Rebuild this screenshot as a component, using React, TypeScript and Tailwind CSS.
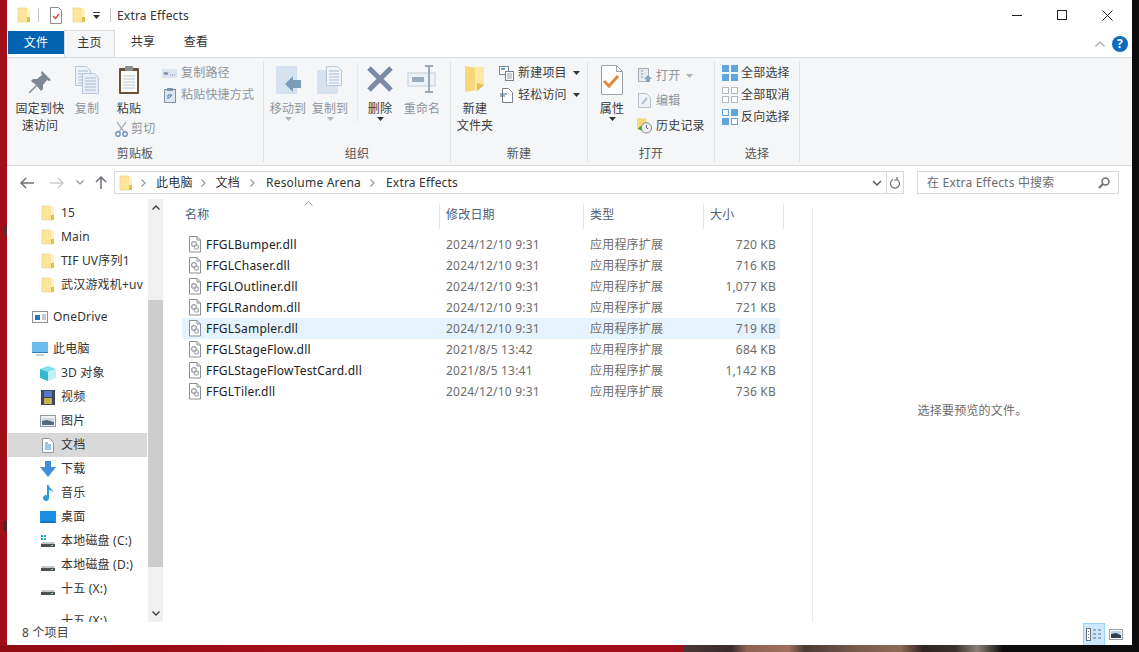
import type { ReactNode } from 'react'

const files = [
  { name: 'FFGLBumper.dll', date: '2024/12/10 9:31', size: '720 KB' },
  { name: 'FFGLChaser.dll', date: '2024/12/10 9:31', size: '716 KB' },
  { name: 'FFGLOutliner.dll', date: '2024/12/10 9:31', size: '1,077 KB' },
  { name: 'FFGLRandom.dll', date: '2024/12/10 9:31', size: '721 KB' },
  { name: 'FFGLSampler.dll', date: '2024/12/10 9:31', size: '719 KB', selected: true },
  { name: 'FFGLStageFlow.dll', date: '2021/8/5 13:42', size: '684 KB' },
  { name: 'FFGLStageFlowTestCard.dll', date: '2021/8/5 13:41', size: '1,142 KB' },
  { name: 'FFGLTiler.dll', date: '2024/12/10 9:31', size: '736 KB' },
]

function Folder({ className = '' }: { className?: string }) {
  return (
    <svg width="14" height="16" viewBox="0 0 14 16" className={className}>
      <path d="M1 1h8l1 1h1v13H1z" fill="#fee59c" stroke="#ecd48a" strokeWidth="0.8" />
      <path d="M10 2h3v13h-3z" fill="#fff0bd" />
      <path d="M10 10h3v5h-3z" fill="#e4bd4e" />
    </svg>
  )
}

function DllIcon() {
  return (
    <svg width="14" height="17" viewBox="0 0 14 17" className="shrink-0">
      <path d="M1.5.5h7.5l3.5 3.5v12h-11z" fill="#fff" stroke="#8b8f93" />
      <path d="M9 .5v3.5h3.5" fill="none" stroke="#8b8f93" />
      <circle cx="6" cy="8" r="2.4" fill="none" stroke="#9a9ea2" strokeWidth="1.2" />
      <circle cx="8.3" cy="11" r="2.2" fill="none" stroke="#a9adb1" strokeWidth="1.2" />
    </svg>
  )
}

function Doc({ x, y, w, h, fill = '#e6edf6', line = '#a9bdd2' }: { x: number; y: number; w: number; h: number; fill?: string; line?: string }) {
  const lines = []
  for (let ly = y + 5; ly < y + h - 2; ly += 3) {
    lines.push(<path key={ly} d={`M${x + 3} ${ly}h${w - 6}`} stroke={line} strokeWidth="1" />)
  }
  return (
    <g>
      <path d={`M${x + 0.5} ${y + 0.5}h${w - 5}l4 4v${h - 5}h-${w - 1}z`} fill={fill} stroke="#b9c8d8" />
      {lines}
    </g>
  )
}

function PinIcon() {
  return (
    <svg width="24" height="24" viewBox="0 0 24 24">
      <path d="M14 1l9 9-2 1-2-1-4 5 0 4-2 2-4-5-7 7-1 0 0-1 7-7-5-4 2-2 4 0 5-4-1-2z" fill="#7e8993" />
    </svg>
  )
}

function CopyIcon() {
  return (
    <svg width="26" height="30" viewBox="0 0 26 30">
      <Doc x={1} y={1} w={16} h={20} fill="#eef3f9" />
      <Doc x={8} y={8} w={17} h={21} />
    </svg>
  )
}

function PasteIcon() {
  return (
    <svg width="22" height="30" viewBox="0 0 22 30">
      <rect x="1" y="3" width="20" height="26" fill="#6b513a" rx="1" />
      <rect x="3" y="6" width="16" height="21" fill="#fbfbf8" />
      <path d="M5 11h12M5 14h12M5 17h12M5 20h12M5 23h12" stroke="#b9c7d6" />
      <rect x="7" y="1" width="8" height="5" fill="#8a8d90" rx="1" />
    </svg>
  )
}

function MoveIcon() {
  return (
    <svg width="28" height="30" viewBox="0 0 28 30">
      <rect x="2" y="1" width="21" height="28" fill="#d6e2ef" />
      <path d="M11 21l8-8v4h8v8h-8v4z" transform="translate(0 -2)" fill="#7b9db9" />
    </svg>
  )
}

function CopyToIcon() {
  return (
    <svg width="28" height="30" viewBox="0 0 28 30">
      <rect x="1" y="5" width="21" height="24" fill="#d6e2ef" />
      <Doc x={10} y={1} w={16} h={20} fill="#f1f5fa" />
    </svg>
  )
}

function DeleteIcon() {
  return (
    <svg width="28" height="28" viewBox="0 0 28 28">
      <path d="M3 3l22 22M25 3L3 25" stroke="#7b8aa4" strokeWidth="5" />
    </svg>
  )
}

function RenameIcon() {
  return (
    <svg width="30" height="28" viewBox="0 0 30 28">
      <rect x="1" y="8" width="27" height="13" fill="#eef2f6" stroke="#c3cdd7" />
      <rect x="5" y="12" width="12" height="5" fill="#9aabbd" />
      <path d="M22 2v24M18 1h8M18 27h8" stroke="#9aa9b7" strokeWidth="2" />
    </svg>
  )
}

function BigFolder() {
  return (
    <svg width="22" height="28" viewBox="0 0 22 28">
      <path d="M1 1l12 2 0 22-12 2z" fill="#f6d87a" />
      <path d="M11 2h9v18l-7 6h-2z" fill="#fde9a6" />
      <path d="M13 18l7 2-7 6z" fill="#e5bd50" />
    </svg>
  )
}

function PropsIcon() {
  return (
    <svg width="24" height="30" viewBox="0 0 24 30">
      <path d="M1.5.5h15l6 6v23h-21z" fill="#fff" stroke="#9aa1a8" />
      <path d="M16.5.5v6h6" fill="none" stroke="#9aa1a8" />
      <path d="M4 16l5 5 9-10" fill="none" stroke="#e08a3c" strokeWidth="3" />
    </svg>
  )
}

function SelectIcon({ kind }: { kind: 'all' | 'none' | 'invert' }) {
  const on = { fill: '#5ea6dc', stroke: '#5ea6dc' }
  const off = { fill: '#fff', stroke: kind === 'none' ? '#b5b9bd' : '#5ea6dc' }
  const cells = kind === 'all' ? [on, on, on, on] : kind === 'none' ? [off, off, off, off] : [off, on, on, off]
  return (
    <svg width="16" height="16" viewBox="0 0 16 16" className="shrink-0">
      <rect x="0.5" y="0.5" width="6" height="6" {...cells[0]} />
      <rect x="9.5" y="0.5" width="6" height="6" {...cells[1]} />
      <rect x="0.5" y="9.5" width="6" height="6" {...cells[2]} />
      <rect x="9.5" y="9.5" width="6" height="6" {...cells[3]} />
    </svg>
  )
}

function DownTri({ dim = false }: { dim?: boolean }) {
  return (
    <svg width="7" height="4" viewBox="0 0 7 4" className="shrink-0">
      <path d="M0 0h7L3.5 4z" fill={dim ? '#b0b4b8' : '#333'} />
    </svg>
  )
}

function BigButton({ icon, lines, width, arrow, dim }: { icon: ReactNode; lines: string[]; width: string; arrow?: 'dark' | 'dim'; dim?: boolean }) {
  return (
    <div className={`flex flex-col items-center pt-[7px] ${width}`}>
      <div className="flex h-[35px] items-start justify-center">{icon}</div>
      {lines.map((l) => (
        <div key={l} className={`h-[17px] leading-[17px] whitespace-nowrap ${dim ? 'text-[#8f959b]' : 'text-[#3c3c3c]'}`}>
          {l}
        </div>
      ))}
      {arrow && <DownTri dim={arrow === 'dim'} />}
    </div>
  )
}

function SmallButton({ icon, label, dim, arrow, h = 'h-[22px]' }: { icon: ReactNode; label: string; dim?: boolean; arrow?: 'dark' | 'dim'; h?: string }) {
  return (
    <div className={`flex items-center gap-[4px] whitespace-nowrap ${h} ${dim ? 'text-[#8f959b]' : 'text-[#3c3c3c]'}`}>
      <div className="flex w-[15px] shrink-0 justify-center">{icon}</div>
      <span>{label}</span>
      {arrow && <span className="ml-[2px]"><DownTri dim={arrow === 'dim'} /></span>}
    </div>
  )
}

function Group({ label, width, children }: { label: string; width: string; children: ReactNode }) {
  return (
    <div className={`flex shrink-0 flex-col ${width}`}>
      <div className="flex h-[88px]">{children}</div>
      <div className="h-[16px] text-center leading-[16px] text-[#555]">{label}</div>
    </div>
  )
}

function GroupLine() {
  return <div className="my-[3px] w-px shrink-0 bg-[#e1e3e5]" />
}

function NavRow({ icon, label, pad, active }: { icon: ReactNode; label: string; pad: string; active?: boolean }) {
  return (
    <div className={`flex h-[24px] shrink-0 items-center gap-[5px] whitespace-nowrap ${pad} ${active ? 'mx-px bg-[#d9d9d9]' : ''}`}>
      <div className="flex w-[16px] shrink-0 justify-center">{icon}</div>
      <span className="text-[#333]">{label}</span>
    </div>
  )
}

function Drive({ win }: { win?: boolean }) {
  return (
    <svg width="16" height="14" viewBox="0 0 16 14">
      {win && <path d="M1 1h2v2H1zM4 1h2v2H4zM1 4h2v2H1zM4 4h2v2H4z" fill="#27a5c9" />}
      <path d="M2 8h12l1 2H1z" fill="#c4c6c8" />
      <rect x="1" y="10" width="14" height="3" fill="#4b5157" />
      <rect x="11" y="11" width="2" height="1" fill="#8fe08f" />
    </svg>
  )
}

function Crumb({ className = '' }: { className?: string }) {
  return (
    <svg width="5" height="8" viewBox="0 0 5 8" className={className}>
      <path d="M.5.500L4 4 .5 7.500" fill="none" stroke="#8e9297" strokeWidth="1.1" />
    </svg>
  )
}

export default function App() {
  return (
    <div className="flex h-[652px] w-[1139px] flex-col overflow-hidden bg-[#111] font-['Noto_Sans','Noto_Sans_CJK_SC',sans-serif] text-[12px] tracking-[0.2px]">
      <div className="flex h-[645px] shrink-0">
        <div className="flex w-[7px] shrink-0 flex-col bg-[#a10f19]">
          <div className="mt-[226px] ml-[4px] h-[10px] w-[3px] bg-[#5c2a2c]" />
          <div className="mt-[285px] ml-[4px] h-[10px] w-[3px] bg-[#4a2325]" />
        </div>

        <div className="flex w-[1125px] shrink-0 flex-col bg-white">
          {/* title bar */}
          <div className="flex h-[30px] shrink-0 items-center">
            <Folder className="ml-[10px]" />
            <div className="ml-[7px] h-[14px] w-px bg-[#c8c8c8]" />
            <svg width="14" height="17" viewBox="0 0 14 17" className="ml-[10px]">
              <path d="M1.5.5h8l3 3v13h-11z" fill="#fff" stroke="#8d8d8d" />
              <path d="M4 9l2.500 2.500L10 7" fill="none" stroke="#d8483a" strokeWidth="1.4" />
            </svg>
            <Folder className="ml-[9px]" />
            <div className="ml-[6px] flex w-[8px] flex-col items-center gap-[2px]">
              <div className="h-px w-[7px] bg-[#333]" />
              <DownTri />
            </div>
            <div className="ml-[10px] h-[14px] w-px bg-[#c8c8c8]" />
            <span className="mt-[2px] ml-[6px] text-[#333]">Extra Effects</span>
            <div className="ml-auto flex items-center">
              <div className="mr-[35px] h-px w-[10px] bg-[#222]" />
              <div className="mr-[35px] h-[10px] w-[10px] border border-[#222]" />
              <svg width="11" height="11" viewBox="0 0 11 11" className="mr-[19px]">
                <path d="M.5.5l10 10M10.500.5l-10 10" stroke="#222" />
              </svg>
            </div>
          </div>

          {/* tabs */}
          <div className="flex h-[28px] shrink-0 items-start">
            <div className="mt-px ml-px flex h-[23px] w-[56px] items-center justify-center bg-[#0063b1] text-white">文件</div>
            <div className="flex h-[28px] w-[51px] items-center justify-center border-x border-t border-[#dadbdc] bg-[#f5f6f7] pb-[3px] text-[#333]">主页</div>
            <div className="flex h-[24px] w-[56px] items-center justify-center text-[#333]">共享</div>
            <div className="flex h-[24px] w-[50px] items-center justify-center text-[#333]">查看</div>
            <div className="mt-[6px] mr-[4px] ml-auto flex items-center gap-[7px]">
              <svg width="10" height="6" viewBox="0 0 10 6">
                <path d="M.5 5.500L5 1l4.500 4.500" fill="none" stroke="#a9adb1" strokeWidth="1.3" />
              </svg>
              <div className="flex h-[16px] w-[16px] items-center justify-center rounded-full bg-[#0f6cbd] text-[12px] leading-none font-bold text-white">?</div>
            </div>
          </div>

          {/* ribbon */}
          <div className="-mt-px flex h-[109px] shrink-0 border-y border-[#dadbdc] bg-[#f5f6f7]">
            <Group label="剪贴板" width="w-[256px]">
              <div className="w-[7px]" />
              <BigButton width="w-[52px]" icon={<div className="pt-[5px]"><PinIcon /></div>} lines={['固定到快', '速访问']} />
              <BigButton width="w-[42px]" dim icon={<CopyIcon />} lines={['复制']} />
              <div className="flex w-[42px] flex-col items-center">
                <BigButton width="w-[42px]" icon={<PasteIcon />} lines={['粘贴']} />
                <div className="mt-[3px] ml-[7px] flex items-center gap-[3px] self-start whitespace-nowrap text-[#8f959b]">
                  <svg width="13" height="16" viewBox="0 0 13 16" className="shrink-0">
                    <path d="M2 1l7 10M11 1L4 11" stroke="#9aa3ab" strokeWidth="1.2" />
                    <circle cx="3" cy="13" r="2.200" fill="none" stroke="#6f93b5" strokeWidth="1.4" />
                    <circle cx="10" cy="13" r="2.200" fill="none" stroke="#6f93b5" strokeWidth="1.4" />
                  </svg>
                  <span>剪切</span>
                </div>
              </div>
              <div className="ml-[12px] flex flex-col pt-[4px]">
                <SmallButton dim label="复制路径" icon={
                  <svg width="15" height="9" viewBox="0 0 15 9"><rect width="15" height="9" fill="#dbe5f0" /><path d="M2 3l1 3 1-3 1 3 1-3M8 6h1M10 6h1M12 6h1" stroke="#7d93aa" fill="none" /></svg>
                } />
                <SmallButton dim label="粘贴快捷方式" icon={
                  <svg width="12" height="15" viewBox="0 0 12 15"><rect x=".5" y="1.500" width="11" height="13" fill="#dce6f0" stroke="#7d93aa" /><rect x="3" y="0" width="6" height="3" fill="#7d93aa" /><path d="M4 11V7h4M8 7l-3 3" stroke="#3a7ab5" fill="none" /></svg>
                } />
              </div>
            </Group>
            <GroupLine />
            <Group label="组织" width="w-[186px]">
              <BigButton width="w-[48px]" dim icon={<MoveIcon />} lines={['移动到']} arrow="dim" />
              <BigButton width="w-[36px]" dim icon={<CopyToIcon />} lines={['复制到']} arrow="dim" />
              <div className="my-[4px] ml-[9px] h-[60px] w-px bg-[#e6e8ea]" />
              <BigButton width="w-[44px]" icon={<DeleteIcon />} lines={['删除']} arrow="dark" />
              <BigButton width="w-[40px]" dim icon={<RenameIcon />} lines={['重命名']} />
            </Group>
            <GroupLine />
            <Group label="新建" width="w-[136px]">
              <BigButton width="w-[48px]" icon={<BigFolder />} lines={['新建', '文件夹']} />
              <div className="flex flex-col pt-[4px]">
                <SmallButton label="新建项目" arrow="dark" icon={
                  <svg width="15" height="15" viewBox="0 0 15 15"><rect x=".5" y=".5" width="9" height="8" fill="#fff" stroke="#6f8a9e" /><rect x="2" y="2" width="4" height="2" fill="#5ea6dc" /><rect x="6.500" y="5.500" width="8" height="9" fill="#fff" stroke="#7b7f83" /><path d="M8 8h5M8 10h5M8 12h5" stroke="#9a9ea2" /></svg>
                } />
                <SmallButton label="轻松访问" arrow="dark" icon={
                  <svg width="13" height="15" viewBox="0 0 13 15"><path d="M2.500.5h6l4 4v10h-10z" fill="#fff" stroke="#7b7f83" /><path d="M0 6h7M0 8h5" stroke="#4a6b8a" /></svg>
                } />
              </div>
            </Group>
            <GroupLine />
            <Group label="打开" width="w-[126px]">
              <BigButton width="w-[48px]" icon={<PropsIcon />} lines={['属性']} arrow="dark" />
              <div className="ml-px flex flex-col pt-[5px]">
                <SmallButton dim h="h-[25px]" label="打开" arrow="dim" icon={
                  <svg width="14" height="15" viewBox="0 0 14 15"><rect x=".5" y=".5" width="10" height="13" fill="#e6ebf0" stroke="#a5aeb7" /><path d="M3 3h2M3 6h2M3 9h2" stroke="#8d97a1" /><path d="M10 7l4 4h-2v3h-4v-3H6z" fill="#8aa4bb" /></svg>
                } />
                <SmallButton dim h="h-[25px]" label="编辑" icon={
                  <svg width="13" height="15" viewBox="0 0 13 15"><path d="M.5.5h8l4 4v10H.5z" fill="#eef2f6" stroke="#b9c2cb" /><path d="M4 11l5-6" stroke="#a9b7c5" strokeWidth="1.5" /></svg>
                } />
                <SmallButton h="h-[25px]" label="历史记录" icon={
                  <svg width="16" height="16" viewBox="0 0 16 16"><rect x="0" y="0" width="10" height="12" fill="#f6d87a" /><circle cx="10" cy="10" r="5.500" fill="#eef0f2" stroke="#7b8085" /><path d="M10 7v3l2 1" stroke="#555" fill="none" /><path d="M1 11l3-3 1 5z" fill="#3f9a3f" /></svg>
                } />
              </div>
            </Group>
            <GroupLine />
            <Group label="选择" width="w-[84px]">
              <div className="ml-[7px] flex flex-col pt-[4px]">
                <SmallButton label="全部选择" icon={<SelectIcon kind="all" />} />
                <SmallButton label="全部取消" icon={<SelectIcon kind="none" />} />
                <SmallButton label="反向选择" icon={<SelectIcon kind="invert" />} />
              </div>
            </Group>
            <GroupLine />
          </div>

          {/* address row */}
          <div className="flex h-[33px] shrink-0 items-center">
            <svg width="14" height="12" viewBox="0 0 14 12" className="ml-[13px]">
              <path d="M6 1L1 6l5 5M1 6h13" fill="none" stroke="#6b7076" strokeWidth="1.5" />
            </svg>
            <svg width="14" height="12" viewBox="0 0 14 12" className="ml-[16px]">
              <path d="M8 1l5 5-5 5M13 6H0" fill="none" stroke="#c9cccf" strokeWidth="1.5" />
            </svg>
            <svg width="8" height="5" viewBox="0 0 8 5" className="ml-[12px]">
              <path d="M.5.5L4 4 7.500.5" fill="none" stroke="#8e9297" strokeWidth="1.2" />
            </svg>
            <svg width="12" height="13" viewBox="0 0 12 13" className="ml-[11px]">
              <path d="M1 6l5-5 5 5M6 1v12" fill="none" stroke="#6b7076" strokeWidth="1.5" />
            </svg>
            <div className="ml-[7px] flex h-[23px] w-[790px] items-center border border-[#d9d9d9] text-[#333]">
              <Folder className="ml-[4px]" />
              <Crumb className="ml-[8px]" />
              <span className="ml-[10px]">此电脑</span>
              <Crumb className="ml-[8px]" />
              <span className="ml-[10px]">文档</span>
              <Crumb className="ml-[10px]" />
              <span className="ml-[11px]">Resolume Arena</span>
              <Crumb className="ml-[9px]" />
              <span className="ml-[11px]">Extra Effects</span>
              <svg width="10" height="6" viewBox="0 0 10 6" className="mr-[2px] ml-auto">
                <path d="M1 1l4 4 4-4" fill="none" stroke="#555" strokeWidth="1.4" />
              </svg>
              <div className="ml-[2px] flex h-full w-[17px] items-center justify-center border-l border-[#d9d9d9]">
                <svg width="11" height="12" viewBox="0 0 11 12">
                  <path d="M3 2.500a4.500 4.500 0 1 0 4 0M7 0v3H4" fill="none" stroke="#6b7076" strokeWidth="1.2" />
                </svg>
              </div>
            </div>
            <div className="ml-[13px] flex h-[23px] w-[202px] items-center border border-[#d9d9d9] pl-[9px] text-[#6d6d6d]">
              在 Extra Effects 中搜索
              <svg width="12" height="12" viewBox="0 0 12 12" className="mr-[8px] ml-auto">
                <circle cx="7.500" cy="4.500" r="3.500" fill="none" stroke="#6b7076" strokeWidth="1.5" />
                <path d="M5 7l-4 4" stroke="#6b7076" strokeWidth="2" />
              </svg>
            </div>
          </div>

          {/* body */}
          <div className="flex h-[423px] shrink-0">
            {/* nav pane */}
            <div className="flex h-[423px] w-[141px] shrink-0 flex-col overflow-hidden pt-[2px]">
              <NavRow pad="pl-[33px]" icon={<Folder />} label="15" />
              <NavRow pad="pl-[33px]" icon={<Folder />} label="Main" />
              <NavRow pad="pl-[33px]" icon={<Folder />} label="TIF UV序列1" />
              <NavRow pad="pl-[33px]" icon={<Folder />} label="武汉游戏机+uv" />
              <div className="h-[8px] shrink-0" />
              <NavRow pad="pl-[25px]" label="OneDrive" icon={
                <svg width="16" height="12" viewBox="0 0 16 12"><rect x=".5" y=".5" width="15" height="11" fill="#fff" stroke="#8d9196" /><rect x="3" y="4" width="5" height="5" fill="#1f78c4" /><path d="M10 4h4M10 6h4M10 8h4" stroke="#8d9196" /></svg>
              } />
              <div className="h-[8px] shrink-0" />
              <NavRow pad="pl-[25px]" label="此电脑" icon={
                <svg width="16" height="14" viewBox="0 0 16 14"><rect x="0" y="0" width="16" height="10" fill="#6bbdf0" /><rect x="0" y="10" width="16" height="1" fill="#2f7fbf" /><path d="M4 13h8" stroke="#9a9ea2" /></svg>
              } />
              <NavRow pad="pl-[33px]" label="3D 对象" icon={
                <svg width="16" height="15" viewBox="0 0 16 15"><path d="M8 0l8 3-8 3-8-3z" fill="#7fe0ea" /><path d="M0 3l8 3v9l-8-3z" fill="#35b6cf" /><path d="M16 3l-8 3v9l8-3z" fill="#bfeef4" /></svg>
              } />
              <NavRow pad="pl-[33px]" label="视频" icon={
                <svg width="14" height="15" viewBox="0 0 14 15"><rect width="14" height="15" fill="#3d4a5c" /><rect x="3" y="1" width="8" height="6" fill="#5b79c9" /><rect x="3" y="8" width="8" height="6" fill="#c6b24b" /></svg>
              } />
              <NavRow pad="pl-[33px]" label="图片" icon={
                <svg width="16" height="12" viewBox="0 0 16 12"><rect x=".5" y=".5" width="15" height="11" fill="#eef2f5" stroke="#8d9aa5" /><path d="M2 3h12v3H2z" fill="#cfdce6" /><path d="M2 6l5-1 7 2v3H2z" fill="#58697a" /></svg>
              } />
              <NavRow pad="pl-[32px]" active label="文档" icon={
                <svg width="12" height="15" viewBox="0 0 12 15"><path d="M.5.5h7l4 4v10H.5z" fill="#fff" stroke="#8d9aa5" /><path d="M3 5h3M3 7h6M3 9h6M3 11h6" stroke="#3a8fc9" /></svg>
              } />
              <NavRow pad="pl-[33px]" label="下载" icon={
                <svg width="16" height="16" viewBox="0 0 16 16"><path d="M5 0h6v6h5l-8 10L0 6h5z" fill="#3f8fdc" /></svg>
              } />
              <NavRow pad="pl-[33px]" label="音乐" icon={
                <svg width="12" height="16" viewBox="0 0 12 16"><path d="M5 0h1.600c.3 3 4.400 3.500 4.400 7.500-1-2-3-2.500-4-2.500v8a3 3 0 1 1-2-2.800z" fill="#2f9ad8" /></svg>
              } />
              <NavRow pad="pl-[33px]" label="桌面" icon={
                <svg width="16" height="12" viewBox="0 0 16 12"><rect width="16" height="12" fill="#1a8fe3" /><path d="M1 11h14" stroke="#0b5ea5" /></svg>
              } />
              <NavRow pad="pl-[33px]" label="本地磁盘 (C:)" icon={<Drive win />} />
              <NavRow pad="pl-[33px]" label="本地磁盘 (D:)" icon={<Drive />} />
              <NavRow pad="pl-[33px]" label="十五 (X:)" icon={<Drive />} />
              <div className="h-[8px] shrink-0" />
              <NavRow pad="pl-[33px]" label="十五 (X:)" icon={<Drive />} />
            </div>

            {/* scrollbar */}
            <div className="flex w-[15px] shrink-0 flex-col items-center bg-[#f0f0f0]">
              <div className="flex h-[17px] shrink-0 items-center justify-center">
                <svg width="8" height="5" viewBox="0 0 8 5"><path d="M.5 4.500L4 1l3.500 3.500" fill="none" stroke="#404040" strokeWidth="1.4" /></svg>
              </div>
              <div className="mt-[84px] h-[267px] w-full shrink-0 bg-[#cdcdcd]" />
              <div className="mt-auto flex h-[17px] shrink-0 items-center justify-center">
                <svg width="8" height="5" viewBox="0 0 8 5"><path d="M.5.500L4 4l3.500-3.500" fill="none" stroke="#404040" strokeWidth="1.4" /></svg>
              </div>
            </div>

            {/* file list */}
            <div className="flex w-[649px] shrink-0 flex-col">
              <div className="relative mt-[5px] ml-[19px] flex h-[25px] shrink-0 items-center text-[#4c607a]">
                <svg width="9" height="5" viewBox="0 0 9 5" className="absolute top-[-3px] left-[122px]">
                  <path d="M.5 4.500L4.500.5l4 4" fill="none" stroke="#9aa0a6" />
                </svg>
                <div className="h-full w-[258px] shrink-0 border-r border-[#e5e5e5] pl-[3px] leading-[21px]">名称</div>
                <div className="h-full w-[144px] shrink-0 border-r border-[#e5e5e5] pl-[6px] leading-[21px]">修改日期</div>
                <div className="h-full w-[120px] shrink-0 border-r border-[#e5e5e5] pl-[6px] leading-[21px]">类型</div>
                <div className="h-full w-[80px] shrink-0 border-r border-[#e5e5e5] pl-[6px] leading-[21px]">大小</div>
              </div>
              <div className="mt-[5px] ml-[19px] flex w-[598px] flex-col">
                {files.map((f) => (
                  <div key={f.name} className={`flex h-[21px] items-center ${f.selected ? 'bg-[#e5f3ff]' : ''}`}>
                    <div className="ml-[6px] flex w-[251px] shrink-0 items-center gap-[4px] whitespace-nowrap text-[#222]">
                      <DllIcon />
                      <span>{f.name}</span>
                    </div>
                    <div className="w-[144px] shrink-0 pl-[7px] text-[#6d6d6d]">{f.date}</div>
                    <div className="w-[120px] shrink-0 pl-[7px] text-[#6d6d6d]">应用程序扩展</div>
                    <div className="w-[73px] shrink-0 text-right text-[#6d6d6d]">{f.size}</div>
                  </div>
                ))}
              </div>
            </div>

            {/* preview pane */}
            <div className="mt-[9px] flex min-w-0 flex-1 items-center justify-center border-l border-[#eaeaea] pb-[8px] text-[#6d6d6d]">
              选择要预览的文件。
            </div>
          </div>

          {/* status bar */}
          <div className="flex h-[24px] shrink-0 items-center">
            <span className="mb-[2px] ml-[15px] text-[#444]">8 个项目</span>
            <div className="ml-auto flex h-[23px] w-[22px] items-center justify-center border border-[#99d1ff] bg-[#cce8ff]">
              <svg width="16" height="13" viewBox="0 0 16 13">
                <rect x=".5" y=".5" width="4" height="12" fill="#fff" stroke="#6b7076" />
                <path d="M2.500 3v1M2.500 6v1M2.500 9v1" stroke="#6b7076" />
                <path d="M7 2h3M12 2h3M7 6h3M12 6h3M7 10h3M12 10h3" stroke="#6b7076" />
              </svg>
            </div>
            <svg width="14" height="11" viewBox="0 0 14 11" className="mr-[9px] ml-[4px]">
              <rect x=".5" y=".5" width="13" height="10" fill="#fff" stroke="#9a9ea2" />
              <path d="M2 2h10v3H2z" fill="#bcd4ea" />
              <path d="M2 5l5-1 5 2v3H2z" fill="#30404f" />
            </svg>
          </div>
        </div>

        <div className="w-[7px] shrink-0 bg-[#0c0c0c]" />
      </div>

      <div className="flex h-[7px] shrink-0">
        <div className="w-[683px] shrink-0 bg-gradient-to-r from-[#8f0c14] via-[#a70f1a] to-[#a00d18]" />
        <svg width="320" height="7" viewBox="0 0 320 7" className="shrink-0">
          <defs>
            <linearGradient id="skin" x1="0" x2="1">
              <stop offset="0" stopColor="#4a3535" />
              <stop offset="0.15" stopColor="#3a2c2e" />
              <stop offset="0.2" stopColor="#8d6354" />
              <stop offset="0.33" stopColor="#a06f5d" />
              <stop offset="0.38" stopColor="#4b3a33" />
              <stop offset="0.55" stopColor="#7a5c4d" />
              <stop offset="0.68" stopColor="#8d6a55" />
              <stop offset="0.75" stopColor="#2f2523" />
              <stop offset="0.85" stopColor="#3a302d" />
              <stop offset="0.92" stopColor="#8b8078" />
              <stop offset="1" stopColor="#0c0c0c" />
            </linearGradient>
          </defs>
          <rect width="320" height="7" fill="url(#skin)" />
        </svg>
        <div className="flex-1 bg-[#0c0c0c]" />
      </div>
    </div>
  )
}
